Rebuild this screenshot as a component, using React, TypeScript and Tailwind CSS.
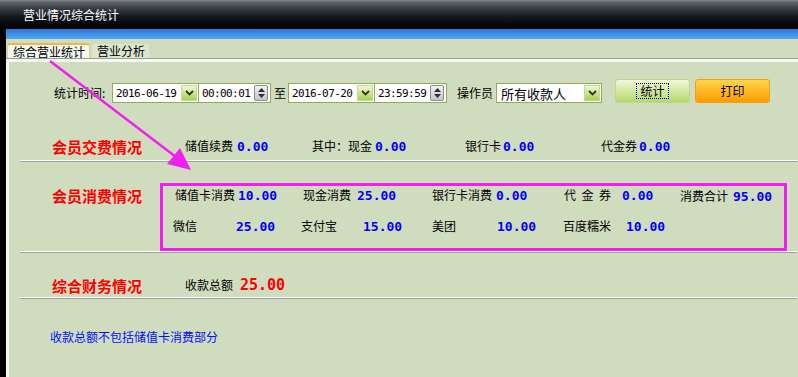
import React from "react";

const mono = "font-['DejaVu_Sans_Mono',monospace]";

function Val({ children }: { children: React.ReactNode }) {
  return (
    <span className="font-['DejaVu_Sans_Mono',monospace] font-bold text-[13px] text-[#0000ff]">
      {children}
    </span>
  );
}

function DropBtn() {
  return (
    <div className="w-[16px] h-[16px] border border-[#c2da92] bg-[linear-gradient(to_bottom,#f0f9d2,#a8d054)] flex items-center justify-center">
      <svg width="9" height="6" viewBox="0 0 9 6">
        <path d="M1 1 L4.5 4.5 L8 1" fill="none" stroke="#2c3a10" strokeWidth="1.8" />
      </svg>
    </div>
  );
}

function Spin() {
  return (
    <div className="w-[14px] h-[16px] rounded-[2px] border border-[#8c8c8c] bg-[linear-gradient(to_bottom,#f2f2f2,#c4c4c4)] flex flex-col items-center justify-center gap-[2px]">
      <svg width="7" height="4" viewBox="0 0 7 4">
        <path d="M0 4 L3.5 0 L7 4 Z" fill="#303030" />
      </svg>
      <svg width="7" height="4" viewBox="0 0 7 4">
        <path d="M0 0 L3.5 4 L7 0 Z" fill="#303030" />
      </svg>
    </div>
  );
}

function DateBox({ value }: { value: string }) {
  return (
    <div className="w-[87px] h-[20px] border border-[#8fae58] bg-white flex items-center justify-between pl-[3px] pr-[1px]">
      <span className={`${mono} text-[11px] tracking-[-0.6px]`}>{value}</span>
      <DropBtn />
    </div>
  );
}

function TimeBox({ value }: { value: string }) {
  return (
    <div className="w-[72px] h-[20px] border border-l-0 border-[#8fae58] bg-white flex items-center justify-between pl-[3px] pr-[2px]">
      <span className={`${mono} text-[11px] tracking-[-0.6px]`}>{value}</span>
      <Spin />
    </div>
  );
}

function Sep() {
  return (
    <div className="ml-[11px] w-[777px] h-[2px] border-t border-t-white border-b border-b-[#a0a0a0]" />
  );
}

export default function App() {
  return (
    <div className="relative w-[798px] h-[377px] overflow-hidden bg-[#d0dcbe] font-['Noto_Sans_CJK_SC',sans-serif] text-[12px] text-black leading-none">
      <div className="h-[29px] flex items-center pl-[23px] text-white text-[12px] bg-[linear-gradient(to_bottom,#85888c_0px,#62666b_2px,#3b4047_8px,#161b21_16px,#05080b_24px,#000_29px)]">
        营业情况综合统计
      </div>
      <div className="flex h-[348px]">
        <div className="w-[6px] bg-black" />
        <div className="flex-1 flex flex-col">
          <div className="h-[10px] bg-[linear-gradient(to_bottom,#2479dc,#55a5ee)]" />
          <div className="h-[19px] flex items-end pl-[1px] bg-[#d0dcbe]">
            <div className="h-[15px] w-[83px] bg-[#f5f6ee] border border-b-0 border-[#ecc98a] border-t-2 border-t-[#f4b24a] rounded-t-[3px] pl-[5px] flex items-center">
              综合营业统计
            </div>
            <div className="ml-[2px] h-[14px] w-[57px] bg-[#dde5d0] rounded-t-[3px] pl-[5px] flex items-center">
              营业分析
            </div>
          </div>
          <div className="h-px bg-[#9a9e96]" />
          <div className="flex-1 border-t-[3px] border-l-[3px] border-[#f6f8f2] flex flex-col">
            {/* filter row */}
            <div className="mt-[17px] h-[24px] flex items-end ml-[45px]">
              <span className="w-[58px] h-[20px] flex items-center">统计时间:</span>
              <DateBox value="2016-06-19" />
              <TimeBox value="00:00:01" />
              <span className="w-[17px] h-[20px] pl-[3px] flex items-center">至</span>
              <DateBox value="2016-07-20" />
              <TimeBox value="23:59:59" />
              <span className="w-[49px] h-[20px] pl-[10px] flex items-center">操作员</span>
              <div className="w-[106px] h-[20px] border border-[#8fae58] bg-white flex items-center justify-between pl-[4px] pr-[1px]">
                <span className="text-[13px]">所有收款人</span>
                <DropBtn />
              </div>
              <div className="ml-[13px] w-[75px] h-[24px] rounded-[3px] border border-[#bcd68a] bg-[linear-gradient(to_bottom,#f0f8da,#b4d868)] flex items-center justify-center">
                <span className="border border-dotted border-black px-[3px] h-[16px] flex items-center">统计</span>
              </div>
              <div className="ml-[5px] w-[75px] h-[24px] rounded-[3px] border border-[#f0a010] bg-[linear-gradient(to_bottom,#ffd64a,#ff9c00)] flex items-center justify-center">
                打印
              </div>
            </div>

            {/* section 1 */}
            <div className="mt-[31px] h-[24px] flex items-center ml-[43px]">
              <span className="w-[133px] text-[15px] font-bold text-[#ff0000]">会员交费情况</span>
              <span className="w-[52px]">储值续费</span>
              <span className="w-[75px]"><Val>0.00</Val></span>
              <span className="w-[63px]">其中：现金</span>
              <span className="w-[90px]"><Val>0.00</Val></span>
              <span className="w-[38px]">银行卡</span>
              <span className="w-[98px]"><Val>0.00</Val></span>
              <span className="w-[38px]">代金券</span>
              <span><Val>0.00</Val></span>
            </div>
            <div className="mt-[2px]">
              <Sep />
            </div>

            {/* section 2 */}
            <div className="mt-[21px] flex items-start ml-[43px]">
              <span className="w-[108px] h-[24px] flex items-center text-[15px] font-bold text-[#ff0000]">会员消费情况</span>
              <div className="w-[627px] h-[68px] border-[3px] border-[#f01ef0] flex flex-col">
                <div className="h-[18px] flex items-center pl-[12px]">
                  <span className="w-[63px]">储值卡消费</span>
                  <span className="w-[65px]"><Val>10.00</Val></span>
                  <span className="w-[54px]">现金消费</span>
                  <span className="w-[75px]"><Val>25.00</Val></span>
                  <span className="w-[64px]">银行卡消费</span>
                  <span className="w-[68px]"><Val>0.00</Val></span>
                  <span className="w-[58px] tracking-[5.5px]">代金券</span>
                  <span className="w-[58px]"><Val>0.00</Val></span>
                  <span className="w-[53px] mt-[2px]">消费合计</span>
                  <span className="mt-[2px]"><Val>95.00</Val></span>
                </div>
                <div className="mt-[13px] h-[18px] flex items-center pl-[10px]">
                  <span className="w-[63px]">微信</span>
                  <span className="w-[65px]"><Val>25.00</Val></span>
                  <span className="w-[62px]">支付宝</span>
                  <span className="w-[69px]"><Val>15.00</Val></span>
                  <span className="w-[65px]">美团</span>
                  <span className="w-[66px]"><Val>10.00</Val></span>
                  <span className="w-[63px]">百度糯米</span>
                  <span><Val>10.00</Val></span>
                </div>
              </div>
            </div>
            <Sep />

            {/* section 3 */}
            <div className="mt-[20px] h-[24px] flex items-center ml-[43px]">
              <span className="w-[133px] text-[15px] font-bold text-[#ff0000]">综合财务情况</span>
              <span className="w-[55px]">收款总额</span>
              <span className="font-['DejaVu_Sans_Mono',monospace] font-bold text-[15px] text-[#ff0000]">25.00</span>
            </div>
            <Sep />

            <div className="mt-[30px] h-[16px] flex items-center ml-[41px] text-[#0010ff]">
              收款总额不包括储值卡消费部分
            </div>
          </div>
        </div>
      </div>

      <svg className="absolute left-0 top-0 pointer-events-none" width="798" height="377">
        <line x1="50" y1="61" x2="176" y2="157" stroke="#f020f0" strokeWidth="2.5" />
        <polygon points="191,170 167,164 180,148" fill="#f020f0" />
      </svg>
    </div>
  );
}
